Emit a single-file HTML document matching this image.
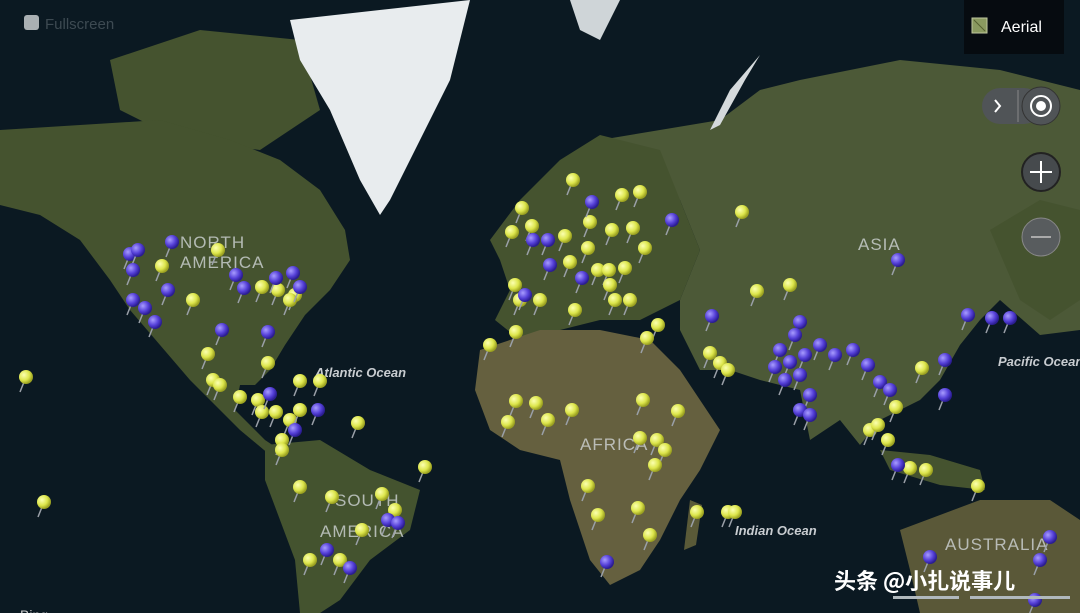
<!DOCTYPE html>
<html><head><meta charset="utf-8"><style>
html,body{margin:0;padding:0;width:1080px;height:613px;overflow:hidden;background:#0b1922;font-family:"Liberation Sans","Noto Sans CJK SC",sans-serif}
svg{position:absolute;left:0;top:0}
.lbl{font-family:"Liberation Sans",sans-serif;fill:#d8dde0;opacity:.75;font-size:17px;letter-spacing:1px}
.oc{font-family:"Liberation Sans",sans-serif;fill:#c8ccd0;font-size:13px;font-weight:bold;font-style:italic}
</style></head><body>
<svg width="1080" height="613" viewBox="0 0 1080 613">
<defs>
<radialGradient id="y" cx="35%" cy="35%" r="65%"><stop offset="0" stop-color="#fbffb0"/><stop offset=".6" stop-color="#dde64c"/><stop offset="1" stop-color="#9aa020"/></radialGradient>
<radialGradient id="p" cx="35%" cy="35%" r="65%"><stop offset="0" stop-color="#a89cff"/><stop offset=".6" stop-color="#5540d8"/><stop offset="1" stop-color="#2a1c90"/></radialGradient>
</defs>
<rect width="1080" height="613" fill="#0b1922"/>
<g fill="#45532f">
<polygon points="110,60 200,30 300,40 320,110 260,150 180,140 120,110"/>
<polygon points="0,130 80,125 160,120 230,140 280,160 320,190 345,230 350,260 330,290 305,315 285,345 270,370 255,385 240,385 235,410 265,440 280,450 270,455 240,430 215,405 190,380 160,345 130,310 110,280 80,240 40,215 0,205"/>
<polygon points="600,140 720,120 760,90 800,80 900,60 1000,70 1080,90 1080,330 1040,335 1000,300 980,320 960,345 940,380 920,400 880,420 860,445 840,420 810,440 800,390 760,380 730,370 700,370 680,330 680,300 700,250 680,200" fill="#4c5937"/>
<polygon points="490,240 520,200 560,160 600,135 660,150 680,200 700,250 680,300 640,320 600,320 560,330 520,340 495,320 510,290 500,260"/>
<polygon points="265,445 320,440 370,470 420,490 410,530 370,560 340,600 320,613 300,613 295,560 280,520 265,480" fill="#44532f"/>
<polygon points="900,530 980,500 1050,500 1080,520 1080,613 920,613 910,570" fill="#5a5838"/>
<polygon points="880,450 930,455 980,470 985,490 940,485 890,470"/>
<polygon points="990,230 1040,200 1080,210 1080,300 1050,320 1020,300"/>
</g>
<polygon points="480,350 540,330 600,330 650,340 680,370 700,400 720,430 700,470 680,500 660,540 640,570 610,585 590,560 570,500 560,460 520,450 490,430 475,390" fill="#65603f"/>
<polygon points="690,500 702,505 696,545 684,550" fill="#5a5a38"/>
<polygon points="290,20 470,0 450,80 420,140 390,200 380,215 360,180 330,110 300,60" fill="#e8ecee"/>
<polygon points="570,0 620,0 600,40 580,30" fill="#cfd5d8"/>
<polygon points="760,55 730,90 710,130 720,125 745,80" fill="#d5dadc"/>
<text class="lbl" x="180" y="248">NORTH</text><text class="lbl" x="180" y="268">AMERICA</text>
<text class="lbl" x="858" y="250">ASIA</text>
<text class="lbl" x="580" y="450">AFRICA</text>
<text class="lbl" x="335" y="506">SOUTH</text><text class="lbl" x="320" y="537">AMERICA</text>
<text class="lbl" x="945" y="550">AUSTRALIA</text>
<text class="oc" x="315" y="377">Atlantic Ocean</text>
<text class="oc" x="735" y="535">Indian Ocean</text>
<text class="oc" x="998" y="366">Pacific Ocean</text>
<g id="pins"></g>
<rect x="964" y="0" width="100" height="54" fill="#050a0e" opacity=".9"/>
<rect x="972" y="18" width="15" height="15" fill="#8a9a60" stroke="#c0c8a0"/>
<line x1="974" y1="20" x2="985" y2="31" stroke="#556030"/>
<text x="1001" y="32" fill="#fff" font-size="16">Aerial</text>
<rect x="982" y="88" width="60" height="36" rx="18" fill="#505457"/>
<line x1="1018" y1="90" x2="1018" y2="122" stroke="#888"/>
<path d="M995,100 l5,6 l-5,6" stroke="#fff" stroke-width="2" fill="none"/>
<circle cx="1041" cy="106" r="19" fill="#505457" stroke="#333"/>
<circle cx="1041" cy="106" r="10" fill="none" stroke="#fff" stroke-width="2"/>
<circle cx="1041" cy="106" r="5" fill="#fff"/>
<circle cx="1041" cy="172" r="19" fill="#464a4d" stroke="#222" stroke-width="2"/>
<path d="M1030,172 h22 M1041,161 v22" stroke="#fff" stroke-width="2"/>
<circle cx="1041" cy="237" r="19" fill="#585c5e" stroke="#888"/>
<path d="M1031,237 h20" stroke="#aaa" stroke-width="2"/>
<rect x="24" y="15" width="15" height="15" rx="3" fill="#aab0b3"/>
<text x="45" y="29" fill="#3d4a52" font-size="15">Fullscreen</text>
<text x="20" y="620" fill="#ccc" font-size="14">Bing</text>
<text x="834" y="589" fill="#fff" font-size="22" font-weight="bold" font-family="Noto Sans CJK SC,sans-serif">头条 @小扎说事儿</text>
<rect x="893" y="596" width="66" height="3" fill="#b0b8bc"/><rect x="970" y="596" width="100" height="3" fill="#b0b8bc"/>
</svg>
<script>
var Y=[[26,377],[44,502],[162,266],[193,300],[218,250],[208,354],[213,380],[220,385],[240,397],[258,400],[262,412],[276,412],[290,420],[300,410],[268,363],[300,381],[320,381],[282,440],[282,450],[358,423],[425,467],[300,487],[332,497],[382,494],[395,510],[362,530],[340,560],[310,560],[262,287],[278,290],[295,295],[290,300],[490,345],[516,332],[515,285],[520,300],[540,300],[522,208],[512,232],[532,226],[565,236],[573,180],[590,222],[622,195],[640,192],[612,230],[633,228],[645,248],[570,262],[588,248],[598,270],[609,270],[625,268],[615,300],[630,300],[575,310],[610,285],[658,325],[647,338],[742,212],[757,291],[790,285],[710,353],[720,363],[728,370],[643,400],[678,411],[516,401],[536,403],[548,420],[572,410],[508,422],[640,438],[657,440],[665,450],[655,465],[588,486],[598,515],[638,508],[650,535],[697,512],[728,512],[735,512],[922,368],[896,407],[870,430],[878,425],[888,440],[910,468],[926,470],[978,486]];
var P=[[130,254],[138,250],[133,270],[172,242],[168,290],[133,300],[145,308],[155,322],[222,330],[236,275],[244,288],[276,278],[293,273],[300,287],[268,332],[270,394],[318,410],[295,430],[327,550],[350,568],[388,520],[398,523],[533,240],[548,240],[592,202],[672,220],[550,265],[582,278],[525,295],[712,316],[898,260],[800,322],[795,335],[780,350],[790,362],[805,355],[820,345],[835,355],[853,350],[868,365],[880,382],[890,390],[775,367],[785,380],[800,375],[810,395],[800,410],[810,415],[945,360],[945,395],[968,315],[992,318],[1010,318],[898,465],[607,562],[930,557],[1050,537],[1040,560],[1035,600]];
var s='';
function add(a,f){a.forEach(function(q){var x=q[0],y=q[1];s+='<line x1="'+x+'" y1="'+y+'" x2="'+(x-6)+'" y2="'+(y+15)+'" stroke="#9aa0a8" stroke-width="1.5"/><circle cx="'+x+'" cy="'+y+'" r="7" fill="url(#'+f+')"/>';});}
add(Y,'y');add(P,'p');
document.getElementById('pins').innerHTML=s;
</script>
</body></html>
